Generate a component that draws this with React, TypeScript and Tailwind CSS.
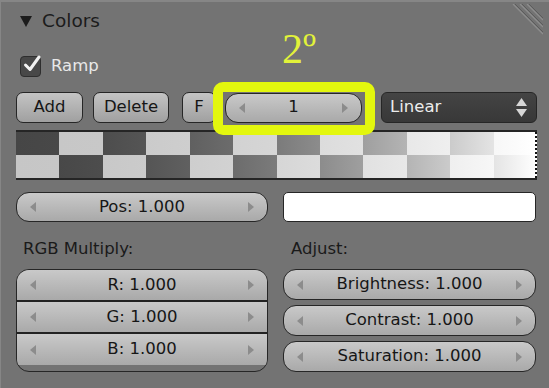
import clsx from "clsx";

const FONT = { fontFamily: '"DejaVu Sans", Verdana, sans-serif' };

// colour ramp preview: checkerboard under a black-to-white alpha ramp
const shade = (base: number, t: number) => {
  const a = Math.pow(t, 1.8);
  const v = Math.round(base + (255 - base) * a);
  return `rgb(${v},${v},${v})`;
};

const Arrow = ({ dir }: { dir: "left" | "right" }) => (
  <svg width="6" height="10" viewBox="0 0 6 10" className="shrink-0">
    <path d={dir === "left" ? "M6 0 L0 5 L6 10 Z" : "M0 0 L6 5 L0 10 Z"} fill="#8c8c8c" />
  </svg>
);

interface NumFieldProps {
  label: string;
  className?: string;
}

const NumField = ({ label, className }: NumFieldProps) => (
  <div
    className={clsx(
      "flex items-center justify-between px-[13px] bg-linear-to-b from-[#c9c9c9] to-[#a9a9a9] text-[16.5px] text-[#161616]",
      className
    )}
  >
    <Arrow dir="left" />
    <span>{label}</span>
    <Arrow dir="right" />
  </div>
);

const Button = ({ label, className }: NumFieldProps) => (
  <div
    className={clsx(
      "flex h-[31px] items-center justify-center rounded-[7px] border border-[#262626] bg-linear-to-b from-[#c4c4c4] to-[#a0a0a0] text-[16.5px] text-[#161616]",
      className
    )}
  >
    {label}
  </div>
);

const Checker = () => {
  const cells = [];
  for (let r = 0; r < 2; r++) {
    for (let c = 0; c < 12; c++) {
      const base = (r + c) % 2 === 0 ? 70 : 198;
      cells.push(
        <div
          key={`${r}-${c}`}
          style={{
            backgroundImage: `linear-gradient(to right, ${shade(base, c / 12)}, ${shade(base, (c + 1) / 12)})`,
          }}
        />
      );
    }
  }
  return (
    <div className="relative mt-[7px] mx-[15px] mr-[12px] h-[50px] border-y-2 border-[#252525]">
      <div className="grid h-full grid-cols-12 grid-rows-2">{cells}</div>
      <div className="absolute right-0 top-0 bottom-0 border-r-2 border-dotted border-[#111]" />
    </div>
  );
};

export default function App() {
  return (
    <div
      className="relative h-[388px] w-[549px] overflow-hidden border-t-2 border-l border-[#868686] bg-[#737373]"
      style={FONT}
    >
      {/* resize grip */}
      <svg className="absolute left-[508px] top-[2px]" width="34" height="32" viewBox="0 0 34 32">
        {[0, 7, 14].map((o) => (
          <g key={o}>
            <line x1={4 + o} y1="0" x2={34} y2={30 - o} stroke="#8e8e8e" strokeWidth="1.2" />
            <line x1={6 + o} y1="0" x2={34} y2={28 - o} stroke="#5c5c5c" strokeWidth="1" />
          </g>
        ))}
      </svg>

      {/* header */}
      <div className="mt-[7px] flex h-[24px] items-center gap-[10px] pl-[19px] text-[18.5px] text-[#1c1c1c]">
        <svg width="12" height="12" viewBox="0 0 12 12">
          <path d="M0 1 L12 1 L6 12 Z" fill="#1c1c1c" />
        </svg>
        <span>Colors</span>
      </div>

      {/* ramp checkbox */}
      <div className="mt-[22px] flex h-[23px] items-center gap-[10px] pl-[19px]">
        <div className="relative h-[21px] w-[21px] rounded-[4px] border border-[#2e2e2e] bg-[#484848]">
          <svg className="absolute -top-[3px] left-[1px]" width="20" height="20" viewBox="0 0 20 20">
            <path d="M3.5 11 L8 15.5 L17 3" fill="none" stroke="#f2f2f2" strokeWidth="3" strokeLinecap="round" strokeLinejoin="round" />
          </svg>
        </div>
        <span className="text-[16.5px] text-[#e8e8e8]">Ramp</span>
      </div>

      {/* buttons row */}
      <div className="mt-[14px] flex items-center pl-[15px]">
        <Button label="Add" className="w-[67px]" />
        <Button label="Delete" className="ml-[10px] w-[76px]" />
        <Button label="F" className="ml-[13px] w-[34px]" />
        <NumField label="1" className="ml-[9px] h-[30px] w-[137px] rounded-[13px] border border-[#262626]" />
        <div className="ml-[19px] flex h-[31px] w-[156px] items-center justify-between rounded-[6px] border border-[#262626] bg-linear-to-b from-[#444] to-[#383838] pl-[8px] pr-[9px] text-[16.5px] text-[#ececec]">
          <span>Linear</span>
          <svg width="11" height="20" viewBox="0 0 11 20">
            <path d="M5.5 0 L11 8 L0 8 Z M0 11 L11 11 L5.5 19 Z" fill="#d6d6d6" />
          </svg>
        </div>
      </div>

      <Checker />

      {/* pos + colour */}
      <div className="mt-[12px] flex gap-[15px] pl-[15px] pr-[13px]">
        <NumField label="Pos: 1.000" className="h-[30px] w-[252px] rounded-[13px] border border-[#262626]" />
        <div className="h-[30px] flex-1 rounded-[5px] border border-[#262626] bg-white" />
      </div>

      {/* labels */}
      <div className="mt-[16px] flex h-[22px] items-center pl-[22px] text-[16.5px] text-[#1a1a1a]">
        <span className="w-[268px]">RGB Multiply:</span>
        <span>Adjust:</span>
      </div>

      {/* columns */}
      <div className="mt-[9px] flex gap-[15px] pl-[15px] pr-[13px]">
        <div className="flex w-[252px] flex-col divide-y-2 divide-[#222] overflow-hidden rounded-[13px] border border-[#262626]">
          <NumField label="R: 1.000" className="h-[32px]" />
          <NumField label="G: 1.000" className="h-[32px]" />
          <NumField label="B: 1.000" className="h-[31px]" />
        </div>
        <div className="flex flex-1 flex-col gap-[5px]">
          <NumField label="Brightness: 1.000" className="h-[31px] rounded-[13px] border border-[#262626]" />
          <NumField label="Contrast: 1.000" className="h-[31px] rounded-[13px] border border-[#262626]" />
          <NumField label="Saturation: 1.000" className="h-[31px] rounded-[13px] border border-[#262626]" />
        </div>
      </div>

      {/* annotation overlay */}
      <div className="absolute left-[212px] top-[80px] h-[53px] w-[162px] rounded-[10px] border-[10px] border-[#e3f70e]" />
      <span
        className="absolute left-[281px] top-[26px] text-[42px] leading-none text-[#e2f23a]"
        style={{ fontFamily: '"Liberation Serif", "Times New Roman", serif' }}
      >
        2º
      </span>
    </div>
  );
}
